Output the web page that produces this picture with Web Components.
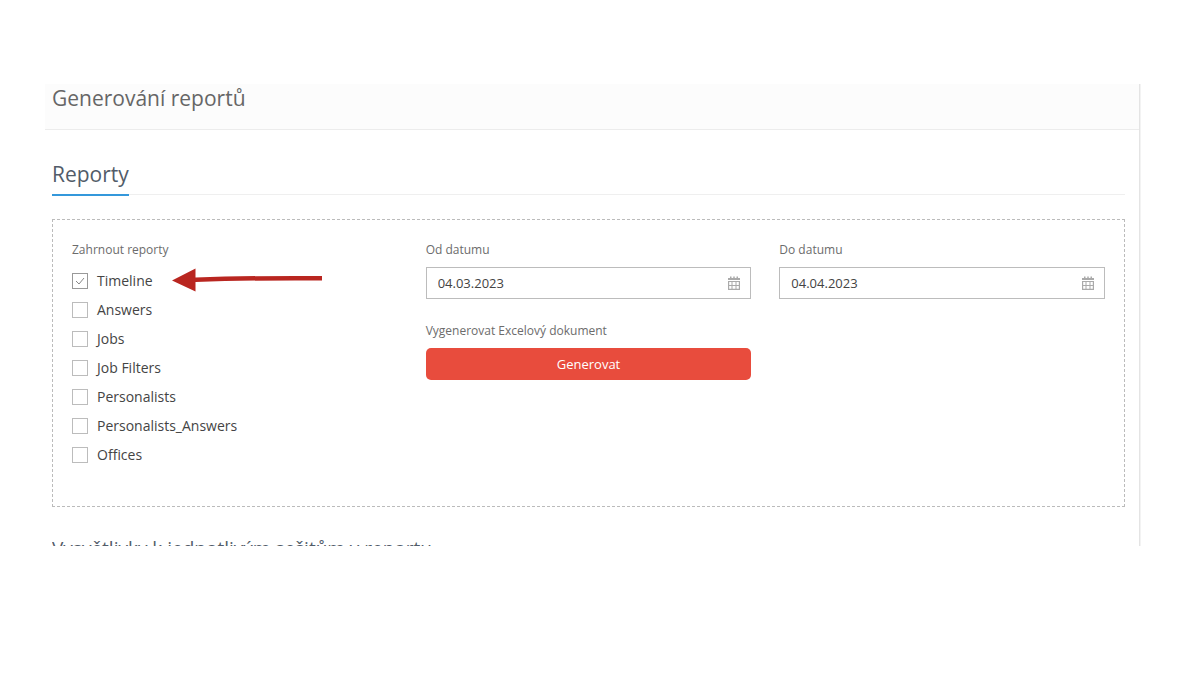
<!DOCTYPE html>
<html lang="cs">
<head>
<meta charset="utf-8">
<meta name="viewport" content="width=device-width, initial-scale=1">
<title>Generování reportů</title>
<style>
body { margin: 0; padding: 84px 59px 84px 45px; background: #fff; color: #444; font: 14px/20px "Open Sans", "Noto Sans", sans-serif; }
</style>
</head>
<body>
<report-panel heading="Generování reportů">
  <section-title underlined>Reporty</section-title>
  <report-box>
    <form-field label="Zahrnout reporty">
      <check-option checked pointed>Timeline</check-option>
      <check-option>Answers</check-option>
      <check-option>Jobs</check-option>
      <check-option>Job Filters</check-option>
      <check-option>Personalists</check-option>
      <check-option>Personalists_Answers</check-option>
      <check-option>Offices</check-option>
    </form-field>
    <field-stack>
      <form-field label="Od datumu"><date-input label="Od datumu" value="04.03.2023"></date-input></form-field>
      <form-field label="Vygenerovat Excelový dokument"><action-button>Generovat</action-button></form-field>
    </field-stack>
    <form-field label="Do datumu"><date-input label="Do datumu" value="04.04.2023"></date-input></form-field>
  </report-box>
  <section-title clipped>Vysvětlivky k jednotlivým sešitům v reportu</section-title>
</report-panel>
<script>
class Base extends HTMLElement {
  connectedCallback() {
    if (this.shadowRoot) return;
    this.attachShadow({ mode: 'open' }).innerHTML = this.view();
  }
}
const define = (name, view) => customElements.define(name, class extends Base { view() { return view(this); } });

define('report-panel', el => `
<style>
:host { display: block; background: #fff; border-right: 1px solid #e4e4e4; box-shadow: 1px 0 #f3f3f3; margin-right: 1px; }
header { background: #fcfcfc; border-bottom: 1px solid #ececec; padding: 0 7px 17px; }
h1 { margin: 0; font-size: 21px; line-height: 28px; font-weight: 400; color: #666; }
main { padding: 30px 14px 0 7px; }
</style>
<header><h1>${el.getAttribute('heading')}</h1></header>
<main><slot></slot></main>`);

define('section-title', () => `
<style>
:host { display: flex; }
h2 { margin: 0; font-size: 21px; line-height: 28px; font-weight: 400; color: #525c69; }
:host([underlined]) { border-bottom: 1px solid #efefef; margin-bottom: 24px; }
:host([underlined]) h2 { padding-bottom: 6px; border-bottom: 2px solid #3498db; margin-bottom: -2px; }
:host([clipped]) { margin-top: 27px; height: 12px; overflow: hidden; }
:host([clipped]) h2 { font-size: 19px; }
</style>
<h2><slot></slot></h2>`);

define('report-box', () => `
<style>
:host { display: grid; grid-template-columns: repeat(3, minmax(0, 1fr)); column-gap: 28px; align-items: start; border: 1px dashed #bbb; padding: 19px 19px 36px; }
</style>
<slot></slot>`);

define('field-stack', () => `
<style>:host { display: grid; row-gap: 21px; }</style>
<slot></slot>`);

define('form-field', el => `
<style>
:host { display: block; }
.label { font-size: 12px; line-height: 22px; color: #6c6c6c; margin-bottom: 6px; }
</style>
<div role="group" aria-labelledby="caption"><div class="label" id="caption">${el.getAttribute('label')}</div><slot></slot></div>`);

define('check-option', el => `
<style>
:host { display: block; position: relative; height: 29px; }
label { display: inline-flex; align-items: center; gap: 9px; height: 28px; color: #444; }
input { appearance: none; margin: 0; width: 16px; height: 16px; border: 1px solid #bcbcbc; background: #fff; }
input:checked { border-color: #999; background: #fff url('data:image/svg+xml,<svg xmlns="http://www.w3.org/2000/svg" viewBox="0 0 14 14"><path d="M3 7l3 3 5-6" fill="none" stroke="%23888"/></svg>') center / 14px no-repeat; }
svg { position: absolute; left: 100px; top: 1px; width: 151px; height: 24px; }
</style>
<label><input type="checkbox" ${el.hasAttribute('checked') ? 'checked' : ''}><span><slot></slot></span></label>
${el.hasAttribute('pointed') ? `<svg viewBox="0 0 151 24" aria-hidden="true"><path d="M0 12.5L23.5 .5V9.500Q80 7.500 150 8V12.500Q80 12 23.500 14V23.500Z" fill="#b92620"/></svg>` : ''}`);

define('date-input', el => `
<style>
:host { display: flex; align-items: center; height: 30px; border: 1px solid #bcbcbc; background: #fff; padding-right: 9px; }
input { flex: 1; min-width: 0; height: 30px; box-sizing: border-box; margin: 0; border: 0; padding: 0 11px; outline: 0; background: transparent; font: inherit; font-size: 13px; color: #444; }
svg { flex: none; width: 14px; height: 14px; }
</style>
<input type="text" aria-label="${el.getAttribute('label')}" value="${el.getAttribute('value')}">
<svg viewBox="0 0 14 14" aria-hidden="true"><path fill="#aaa" fill-rule="evenodd" d="M1 2h2V.5h1.500V2h1.750V.5h1.500V2H9.500V.5H11V2h2v2H1zM1 5h12v9H1zM2.200 6v3h2.300V6zM5.500 6v3h3V6zM9.500 6v3h2.300V6zM2.200 10v2.800h2.300V10zM5.500 10v2.800h3V10zM9.500 10v2.800h2.300V10z"/></svg>`);

define('action-button', () => `
<style>
:host { display: block; }
button { display: block; width: 100%; height: 32px; border: 0; border-radius: 5px; padding: 0; background: #e84c3d; color: #fff; font: inherit; font-size: 13px; cursor: pointer; }
</style>
<button type="button"><slot></slot></button>`);
</script>
</body>
</html>
